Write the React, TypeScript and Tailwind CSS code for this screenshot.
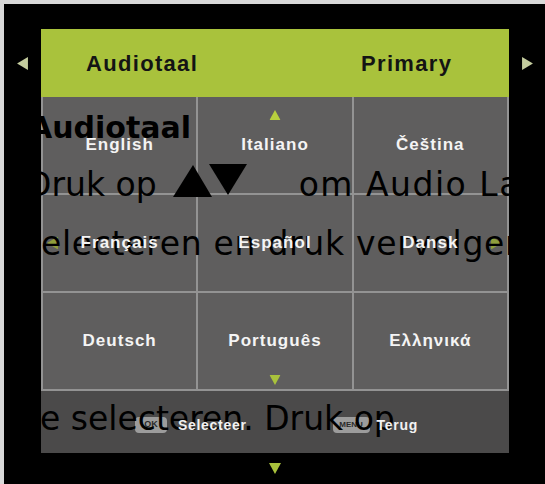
// Audio language picker — TV menu with help text bleeding through.

type Cell = { label: string; up?: boolean; down?: boolean; left?: boolean; right?: boolean };

const cells: Cell[] = [
  { label: "English" },
  { label: "Italiano", up: true },
  { label: "Čeština" },
  { label: "Français", left: true },
  { label: "Español" },
  { label: "Dansk", right: true },
  { label: "Deutsch" },
  { label: "Português", down: true },
  { label: "Ελληνικά" },
];

function Arrow({ dir, className }: { dir: "up" | "down" | "left" | "right"; className?: string }) {
  const points = {
    up: "0,10 5.5,0 11,10",
    down: "0,0 11,0 5.5,10",
    left: "10,0 10,12 0,6",
    right: "0,0 10,6 0,12",
  }[dir];
  const box = dir === "left" || dir === "right" ? "0 0 10 12" : "0 0 11 10";
  const size = dir === "left" || dir === "right" ? "w-[11px] h-[13px]" : "w-[11px] h-[10px]";
  return (
    <svg viewBox={box} className={`${size} ${className ?? ""}`} fill="currentColor">
      <polygon points={points} />
    </svg>
  );
}

export default function App() {
  const sans = "font-['Liberation_Sans',Arial,sans-serif]";
  const help = "font-['DejaVu_Sans',sans-serif] text-black whitespace-nowrap leading-none";

  return (
    <div className="relative w-[545px] h-[484px] overflow-hidden bg-black border-t-[4px] border-l-[4px] border-[#d9d9d9] pt-[25px]">
      <div className="flex">
        {/* left scroll arrow */}
        <div className="w-[37px] h-[68px] flex items-center justify-center text-[#c4cc9e]">
          <Arrow dir="left" />
        </div>

        <div className="w-[468px]">
          {/* header */}
          <div className={`h-[68px] bg-[#a9c23c] flex items-center pl-[45px] ${sans} text-[22px] font-bold tracking-[0.06em] text-[#141414]`}>
            <span className="w-[275px]">Audiotaal</span>
            <span>Primary</span>
          </div>

          {/* language grid */}
          <div className="grid grid-cols-3 gap-[2px] bg-[#939393] px-[2px] pb-[2px]">
            {cells.map((c) => (
              <div key={c.label} className="relative h-[96px] bg-[#5f5e5e] flex items-center justify-center">
                {c.up && <Arrow dir="up" className="absolute top-[13px] left-1/2 -translate-x-1/2 text-[#b7cf3e]" />}
                {c.down && <Arrow dir="down" className="absolute bottom-[4px] left-1/2 -translate-x-1/2 text-[#a9c23c]" />}
                {c.left && <Arrow dir="left" className="absolute left-[4px] top-1/2 -translate-y-1/2 text-[#8f9e3c]" />}
                {c.right && <Arrow dir="right" className="absolute right-[5px] top-1/2 -translate-y-1/2 text-[#8f9e3c]" />}
                <span className={`relative z-20 ${sans} text-[17px] font-bold tracking-[0.06em] text-[#f4f4f4]`}>
                  {c.label}
                </span>
              </div>
            ))}
          </div>

          {/* footer hints */}
          <div className={`h-[62px] bg-[#4b4a4a] flex items-center pl-[94px] pt-[6px] ${sans}`}>
            <span className="w-[32px] h-[16px] rounded-[4px] bg-[#9c9c9c] flex items-center justify-center text-[9px] font-bold text-[#2a2a2a]">
              OK
            </span>
            <span className="relative z-20 ml-[11px] text-[14px] font-bold tracking-[0.05em] text-[#f2f2f2]">
              Selecteer
            </span>
            <span className="ml-[86px] w-[37px] h-[16px] rounded-[4px] bg-[#9c9c9c] flex items-center justify-center text-[8px] font-bold text-[#2a2a2a]">
              MENU
            </span>
            <span className="relative z-20 ml-[7px] text-[14px] font-bold tracking-[0.05em] text-[#f2f2f2]">
              Terug
            </span>
          </div>

          <div className="flex justify-center mt-[10px] text-[#a9c23c]">
            <Arrow dir="down" className="w-[12px] h-[11px]" />
          </div>
        </div>

        {/* right scroll arrow */}
        <div className="flex-1 h-[68px] flex items-center justify-center text-[#c4cc9e]">
          <Arrow dir="right" />
        </div>
      </div>

      {/* help text bleeding through the menu */}
      <div className="absolute -top-[4px] -left-[4px] w-[545px] h-[484px] z-10 pointer-events-none">
        <div className={`absolute top-[113px] left-[29px] text-[30px] font-bold ${help}`}>Audiotaal</div>
        <div className="absolute top-[168px] left-[26px] flex items-start">
          <span className={`text-[33px] ${help}`}>Druk op</span>
          <svg viewBox="0 0 74 33" className="ml-[16px] -mt-[4px] w-[74px] h-[33px]" fill="#000">
            <polygon points="0,33 20,1 39,33" />
            <polygon points="36,0 74,0 55,31" />
          </svg>
          <span className={`ml-[52px] text-[33px] tracking-[1.5px] ${help}`}>om Audio Language te</span>
        </div>
        <div className={`absolute top-[227px] left-[23px] text-[33px] tracking-[0.7px] ${help}`}>
          selecteren en druk vervolgens op
        </div>
        <div className={`absolute top-[402px] left-[40px] text-[33px] ${help}`}>e selecteren. Druk op</div>
      </div>
    </div>
  );
}
